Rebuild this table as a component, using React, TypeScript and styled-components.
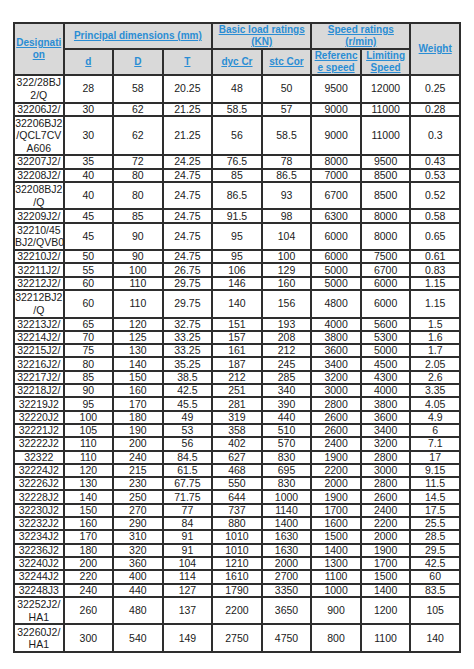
import React from 'react';
import styled, { createGlobalStyle } from 'styled-components';

const GlobalStyle = createGlobalStyle`
  html, body {
    margin: 0;
    padding: 0;
    background: #ffffff;
  }
  body {
    font-family: 'Liberation Sans', Arial, sans-serif;
  }
`;

const Page = styled.div`
  padding: 22px 0 0 13px;
`;

const Sheet = styled.table`
  border-collapse: collapse;
  table-layout: fixed;
  width: 448px;
  border: 2px solid #2e2e2e;
`;

const HeadRow = styled.tr<{ $h: number }>`
  height: ${props => props.$h}px;
`;

const HeadCell = styled.th`
  background: #d9d9d9;
  border: 2px solid #2e2e2e;
  padding: 0;
  font-size: 10px;
  font-weight: bold;
  line-height: 12px;
  color: #2a8dd4;
  text-decoration: underline;
  white-space: pre-line;
  text-align: center;
  vertical-align: middle;
`;

const Row = styled.tr<{ $h: number }>`
  height: ${props => props.$h}px;
`;

const Cell = styled.td<{ $multi?: boolean }>`
  border: 2px solid #2e2e2e;
  padding: 0;
  font-size: 10.5px;
  line-height: ${props => (props.$multi ? '12.5px' : '11px')};
  color: #1a1a1a;
  text-align: center;
  vertical-align: middle;
  white-space: pre-line;
`;

type Bearing = [string, string, string, string, string, string, string, string, string];

const bearings: Bearing[] = [
  ['322/28BJ\n2/Q', '28', '58', '20.25', '48', '50', '9500', '12000', '0.25'],
  ['32206J2/', '30', '62', '21.25', '58.5', '57', '9000', '11000', '0.28'],
  ['32206BJ2\n/QCL7CV\nA606', '30', '62', '21.25', '56', '58.5', '9000', '11000', '0.3'],
  ['32207J2/', '35', '72', '24.25', '76.5', '78', '8000', '9500', '0.43'],
  ['32208J2/', '40', '80', '24.75', '85', '86.5', '7000', '8500', '0.53'],
  ['32208BJ2\n/Q', '40', '80', '24.75', '86.5', '93', '6700', '8500', '0.52'],
  ['32209J2/', '45', '85', '24.75', '91.5', '98', '6300', '8000', '0.58'],
  ['32210/45\nBJ2/QVB0', '45', '90', '24.75', '95', '104', '6000', '8000', '0.65'],
  ['32210J2/', '50', '90', '24.75', '95', '100', '6000', '7500', '0.61'],
  ['32211J2/', '55', '100', '26.75', '106', '129', '5000', '6700', '0.83'],
  ['32212J2/', '60', '110', '29.75', '146', '160', '5000', '6000', '1.15'],
  ['32212BJ2\n/Q', '60', '110', '29.75', '140', '156', '4800', '6000', '1.15'],
  ['32213J2/', '65', '120', '32.75', '151', '193', '4000', '5600', '1.5'],
  ['32214J2/', '70', '125', '33.25', '157', '208', '3800', '5300', '1.6'],
  ['32215J2/', '75', '130', '33.25', '161', '212', '3600', '5000', '1.7'],
  ['32216J2/', '80', '140', '35.25', '187', '245', '3400', '4500', '2.05'],
  ['32217J2/', '85', '150', '38.5', '212', '285', '3200', '4300', '2.6'],
  ['32218J2/', '90', '160', '42.5', '251', '340', '3000', '4000', '3.35'],
  ['32219J2', '95', '170', '45.5', '281', '390', '2800', '3800', '4.05'],
  ['32220J2', '100', '180', '49', '319', '440', '2600', '3600', '4.9'],
  ['32221J2', '105', '190', '53', '358', '510', '2600', '3400', '6'],
  ['32222J2', '110', '200', '56', '402', '570', '2400', '3200', '7.1'],
  ['32322', '110', '240', '84.5', '627', '830', '1900', '2800', '17'],
  ['32224J2', '120', '215', '61.5', '468', '695', '2200', '3000', '9.15'],
  ['32226J2', '130', '230', '67.75', '550', '830', '2000', '2800', '11.5'],
  ['32228J2', '140', '250', '71.75', '644', '1000', '1900', '2600', '14.5'],
  ['32230J2', '150', '270', '77', '737', '1140', '1700', '2400', '17.5'],
  ['32232J2', '160', '290', '84', '880', '1400', '1600', '2200', '25.5'],
  ['32234J2', '170', '310', '91', '1010', '1630', '1500', '2000', '28.5'],
  ['32236J2', '180', '320', '91', '1010', '1630', '1400', '1900', '29.5'],
  ['32240J2', '200', '360', '104', '1210', '2000', '1300', '1700', '42.5'],
  ['32244J2', '220', '400', '114', '1610', '2700', '1100', '1500', '60'],
  ['32248J3', '240', '440', '127', '1790', '3350', '1000', '1400', '83.5'],
  ['32252J2/\nHA1', '260', '480', '137', '2200', '3650', '900', '1200', '105'],
  ['32260J2/\nHA1', '300', '540', '149', '2750', '4750', '800', '1100', '140'],
];

const rowHeight = (lines: number) => {
  switch (lines) {
    case 3:
      return 39.5;
    case 2:
      return 27.5;
    default:
      return 13.3;
  }
};

export default function App() {
  return (
    <>
      <GlobalStyle />
      <Page>
        <Sheet>
          <thead>
            <HeadRow $h={24}>
              <HeadCell rowSpan={2}>{'Designati\non'}</HeadCell>
              <HeadCell colSpan={3}>Principal dimensions (mm)</HeadCell>
              <HeadCell colSpan={2}>{'Basic load ratings\n(KN)'}</HeadCell>
              <HeadCell colSpan={2}>{'Speed ratings\n(r/min)'}</HeadCell>
              <HeadCell rowSpan={2}>Weight</HeadCell>
            </HeadRow>
            <HeadRow $h={25}>
              <HeadCell>d</HeadCell>
              <HeadCell>D</HeadCell>
              <HeadCell>T</HeadCell>
              <HeadCell>dyc Cr</HeadCell>
              <HeadCell>stc Cor</HeadCell>
              <HeadCell>{'Referenc\ne speed'}</HeadCell>
              <HeadCell>{'Limiting\nSpeed'}</HeadCell>
            </HeadRow>
          </thead>
          <tbody>
            {bearings.map(b => {
              const lines = b[0].split('\n').length;
              return (
                <Row key={b[0]} $h={rowHeight(lines)}>
                  {b.map((v, i) => (
                    <Cell key={i} $multi={i === 0 && lines > 1}>
                      {v}
                    </Cell>
                  ))}
                </Row>
              );
            })}
          </tbody>
        </Sheet>
      </Page>
    </>
  );
}
